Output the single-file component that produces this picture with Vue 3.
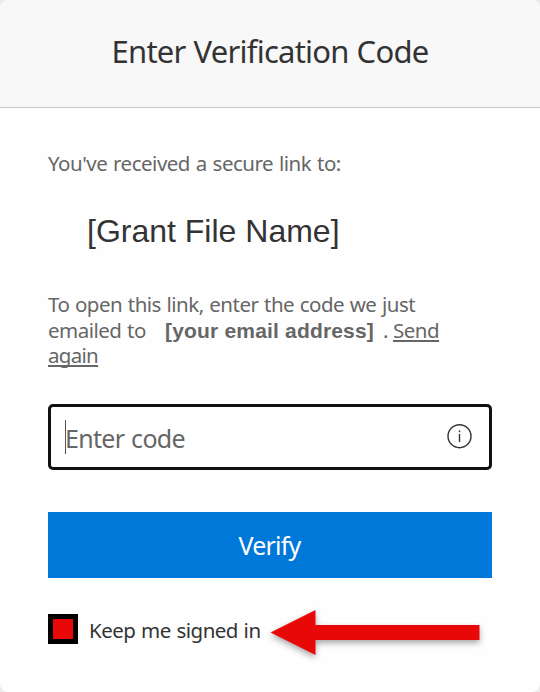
<script setup>
import { ref } from 'vue'

const keepSignedIn = ref(true)
const toggle = () => { keepSignedIn.value = !keepSignedIn.value }
</script>

<template>
  <div class="page">
    <main class="card">
      <header class="head">
        <h1 class="title">Enter Verification Code</h1>
      </header>
      <section class="body">
        <p class="received">You've received a secure link to:</p>
        <h2 class="file">[Grant File Name]</h2>
        <div class="hint">
          <div class="t-open">To open this link, enter the code we just</div>
          <div class="email-row">
            <span class="t-emailed">emailed to</span>
            <strong class="email">[your email address]</strong>
            <span class="dot">.</span>
            <a class="link">Send</a>
          </div>
          <div><a class="link again">again</a></div>
        </div>
        <div class="field">
          <span class="caret"></span>
          <span class="placeholder">Enter code</span>
          <svg class="info" width="26" height="26" viewBox="0 0 26 26" fill="none" stroke="#333" stroke-width="1.4">
            <circle cx="12.5" cy="12.2" r="11.5" />
            <path d="M12.5 10v8" />
            <path d="M12.5 6.4v1.8" />
          </svg>
        </div>
        <button class="verify"><span>Verify</span></button>
        <div class="keep" @click="toggle">
          <span class="box" :class="{ on: keepSignedIn }"></span>
          <span class="keep-label">Keep me signed in</span>
          <svg class="arrow" width="224" height="64" viewBox="0 0 224 64">
            <path d="M4.5 32.5 49.5 10v15h164v15h-164v15z" fill="#e90808" />
          </svg>
        </div>
      </section>
    </main>
  </div>
</template>

<style>
body { margin: 0; background: #e9e9e9; }
</style>

<style scoped>
.page { width: 540px; height: 692px; background: #e9e9e9; overflow: hidden; }
.card {
  width: 540px; height: 692px; box-sizing: border-box; overflow: hidden;
  background: #fefefe; border-radius: 8px;
  font-family: "Noto Sans", "Open Sans", sans-serif; font-weight: 400; color: #666;
}
.head {
  height: 108px; box-sizing: border-box; display: flex; justify-content: center;
  background: #f8f8f8; border-bottom: 1px solid #c8c8c8;
}
.title { margin: 29px 0 0; font-size: 31px; line-height: 44px; font-weight: 400; color: #333; letter-spacing: -0.75px; word-spacing: 0.5px; white-space: nowrap; }
.body { padding: 41px 48px 0; }
.received { margin: 0; font-size: 20.5px; line-height: 28px; letter-spacing: -0.5px; word-spacing: 1px; white-space: nowrap; }
.file { margin: 34px 0 0 39px; font: 400 32px/40px "Liberation Sans", Arial, sans-serif; color: #333; white-space: nowrap; }
.hint { margin-top: 41px; font-size: 20.5px; line-height: 25.7px; letter-spacing: -0.5px; word-spacing: 0.75px; white-space: nowrap; }
.email-row { display: flex; align-items: baseline; }
.t-emailed { width: 117px; }
.email { width: 218px; font: 700 21px/25px "Liberation Sans", Arial, sans-serif; letter-spacing: 0.18px; word-spacing: 0; }
.dot { width: 10px; }
.link { text-decoration: underline; text-decoration-thickness: 2px; text-underline-offset: 2px; text-decoration-skip-ink: none; }
.again { letter-spacing: -0.7px; }
.field {
  height: 66px; margin-top: 35px; box-sizing: border-box; border: 3px solid #111; border-radius: 5px;
  display: flex; align-items: center; padding: 0 16px 0 14px; background: #fff;
}
.caret { width: 1px; height: 34px; background: #555; }
.placeholder { flex: 1; margin-left: -1px; font-size: 25px; line-height: 34px; letter-spacing: -0.7px; word-spacing: 1px; padding-top: 2px; }
.verify {
  display: block; width: 444px; height: 66px; margin: 42px 0 0; padding: 0 1px 0 0; border: 0; border-radius: 0;
  background: #0078d9; color: #fff; font: 400 25px/34px "Noto Sans", "Open Sans", sans-serif; letter-spacing: -0.8px;
}
.keep { display: flex; align-items: center; height: 64px; margin: 22px -48px 0 0; }
.box { width: 30px; height: 30px; margin-bottom: 6px; box-sizing: border-box; border: 5px solid #000; background: #fff; flex: none; }
.box.on { background: #e90808; }
.keep-label { width: 177px; margin: 0 0 5px 11px; font-size: 20.5px; line-height: 28px; letter-spacing: -0.5px; word-spacing: 0.8px; color: #333; white-space: nowrap; flex: none; }
.arrow { flex: none; filter: drop-shadow(0 3px 3px rgba(0, 0, 0, 0.35)); overflow: visible; }
</style>
